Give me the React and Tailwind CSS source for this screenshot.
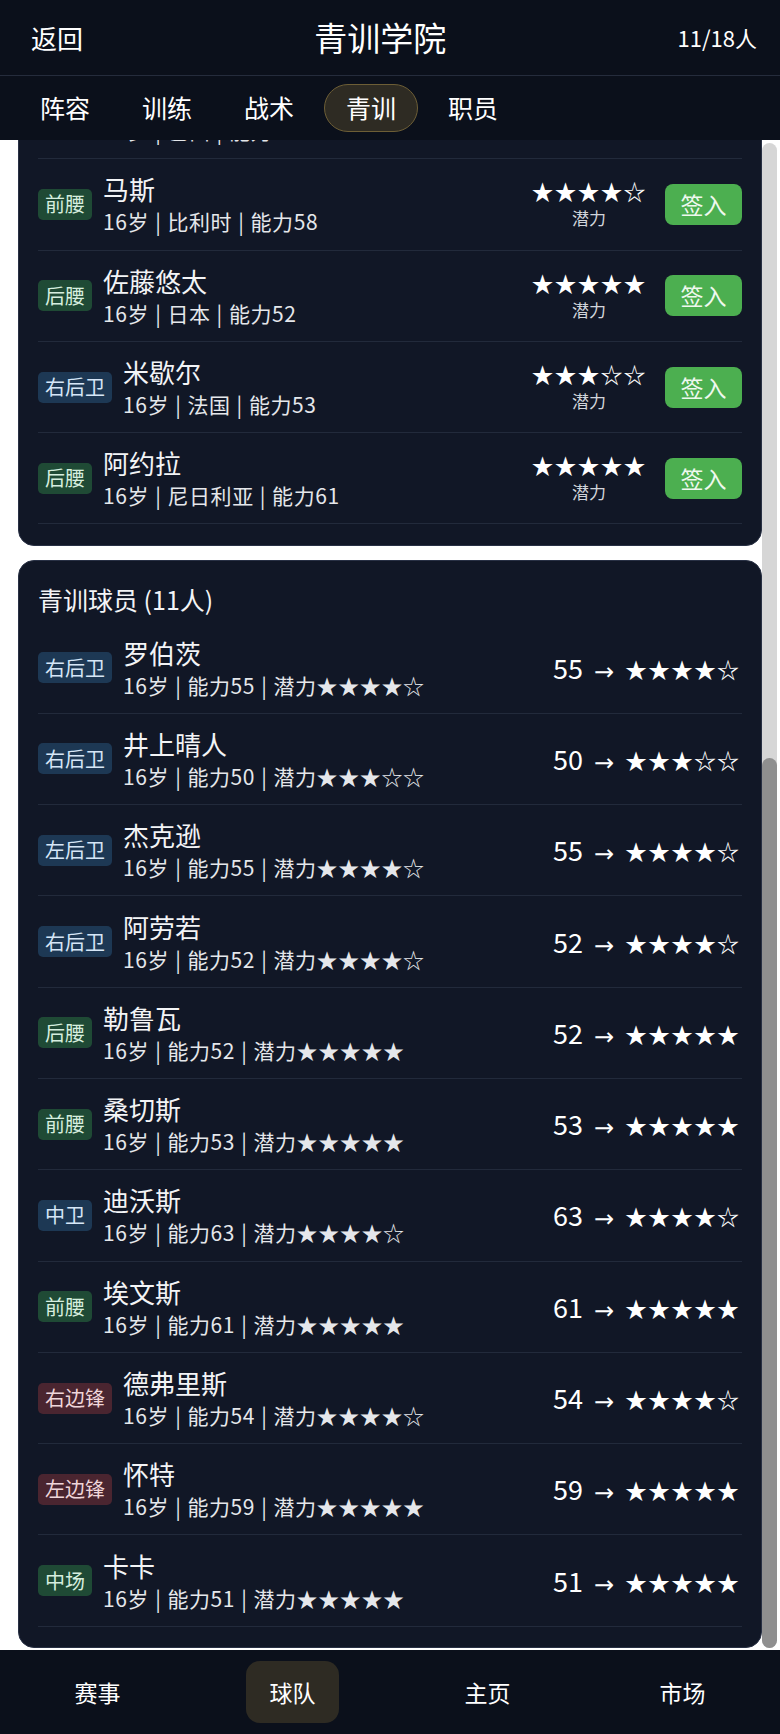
import React from 'react';

const FONT = { fontFamily: '"Noto Sans CJK SC", "Noto Sans", sans-serif' };
const ARROW_FONT = { fontFamily: '"DejaVu Sans", sans-serif' };

const BADGE = {
  green: 'bg-[#1f4a35] text-[#d6eedf]',
  blue: 'bg-[#1d3854] text-[#d6e6f7]',
  red: 'bg-[#4a2530] text-[#f0d6da]',
};

const posColor = (pos) => {
  if (pos.includes('边锋')) return 'red';
  if (pos.includes('卫')) return 'blue';
  return 'green';
};

const stars = (n) => '★'.repeat(n) + '☆'.repeat(5 - n);

// 待签约的青训候选
const prospects = [
  { pos: '中场', name: '席尔瓦', sub: ['16岁', '巴西', '能力55'], pot: 4 },
  { pos: '前腰', name: '马斯', sub: ['16岁', '比利时', '能力58'], pot: 4 },
  { pos: '后腰', name: '佐藤悠太', sub: ['16岁', '日本', '能力52'], pot: 5 },
  { pos: '右后卫', name: '米歇尔', sub: ['16岁', '法国', '能力53'], pot: 3 },
  { pos: '后腰', name: '阿约拉', sub: ['16岁', '尼日利亚', '能力61'], pot: 5 },
];

// 已在青训的球员
const youth = [
  { pos: '右后卫', name: '罗伯茨', ovr: 55, pot: 4 },
  { pos: '右后卫', name: '井上晴人', ovr: 50, pot: 3 },
  { pos: '左后卫', name: '杰克逊', ovr: 55, pot: 4 },
  { pos: '右后卫', name: '阿劳若', ovr: 52, pot: 4 },
  { pos: '后腰', name: '勒鲁瓦', ovr: 52, pot: 5 },
  { pos: '前腰', name: '桑切斯', ovr: 53, pot: 5 },
  { pos: '中卫', name: '迪沃斯', ovr: 63, pot: 4 },
  { pos: '前腰', name: '埃文斯', ovr: 61, pot: 5 },
  { pos: '右边锋', name: '德弗里斯', ovr: 54, pot: 4 },
  { pos: '左边锋', name: '怀特', ovr: 59, pot: 5 },
  { pos: '中场', name: '卡卡', ovr: 51, pot: 5 },
];

function Badge({ pos }) {
  return (
    <span className={`shrink-0 h-[31px] px-[7px] rounded-[5px] flex items-center text-[20px] leading-none ${BADGE[posColor(pos)]}`}>
      {pos}
    </span>
  );
}

function PlayerInfo({ pos, name, sub }) {
  return (
    <div className="flex items-center gap-[11px] min-w-0">
      <Badge pos={pos} />
      <div className="flex flex-col">
        <span className="text-[26px] leading-[34px] text-[#f3f4f6]">{name}</span>
        <span className="text-[21px] leading-[30px] text-[#e5e7eb] whitespace-nowrap tracking-[0.6px]">
          {sub.map((s, i) => (
            <React.Fragment key={i}>
              {i > 0 && <span className="mx-[6px]">|</span>}
              {s}
            </React.Fragment>
          ))}
        </span>
      </div>
    </div>
  );
}

function Card({ children, className = '' }) {
  return (
    <div className={`bg-[#111726] border border-[#283044] rounded-[16px] px-[19px] ${className}`}>
      {children}
    </div>
  );
}

export default function App() {
  const tabs = ['阵容', '训练', '战术', '青训', '职员'];
  const nav = ['赛事', '球队', '主页', '市场'];

  return (
    <div className="w-full h-[1734px] flex flex-col bg-white overflow-hidden" style={FONT}>
      <header className="h-[76px] shrink-0 bg-[#0b101b] border-b border-[#252c3c] flex items-center justify-between pl-[31px] pr-[23px] text-white">
        <span className="text-[26px]">返回</span>
        <span className="text-[33px]">青训学院</span>
        <span className="text-[22px]">11/18人</span>
      </header>

      <nav className="h-[64px] shrink-0 bg-[#0b101b] flex items-center gap-[8px] pl-[18px]">
        {tabs.map((t) => (
          <div
            key={t}
            className={`w-[94px] h-[48px] flex items-center justify-center rounded-full text-[25px] text-white ${
              t === '青训' ? 'bg-[#2e2b23] border border-[#6d5e36]' : ''
            }`}
          >
            {t}
          </div>
        ))}
      </nav>

      <div className="h-[1510px] shrink-0 flex overflow-hidden bg-white">
        <div className="flex-1 pl-[18px] overflow-hidden">
          <div className="mt-[-134px] flex flex-col gap-[14px]">
            <Card className="pb-[21px]">
              <div className="h-[61px] pt-[22px] text-[25px] leading-[32px] text-[#f3f4f6]">新秀候选 (5人)</div>
              {prospects.map((p) => (
                <div key={p.name} className="h-[91.3px] border-b border-[#222a3b] flex items-center justify-between">
                  <PlayerInfo pos={p.pos} name={p.name} sub={p.sub} />
                  <div className="flex items-center gap-[19px]">
                    <div className="flex flex-col items-center w-[114px]">
                      <span className="text-[22px] leading-[28px] text-white tracking-[1px]">{stars(p.pot)}</span>
                      <span className="text-[17px] leading-[28px] text-[#d1d5db]">潜力</span>
                    </div>
                    <button className="w-[77px] h-[41px] rounded-[8px] bg-[#4caf50] text-[23px] text-[#eef8ee] flex items-center justify-center">
                      签入
                    </button>
                  </div>
                </div>
              ))}
            </Card>

            <Card className="pb-[20px]">
              <div className="h-[61px] pt-[22px] text-[25px] leading-[32px] text-[#f3f4f6]">青训球员 (11人)</div>
              {youth.map((p) => (
                <div key={p.name} className="h-[91.3px] border-b border-[#222a3b] flex items-center justify-between">
                  <PlayerInfo pos={p.pos} name={p.name} sub={['16岁', `能力${p.ovr}`, `潜力${stars(p.pot)}`]} />
                  <div className="flex items-center text-white whitespace-nowrap pr-[2px]">
                    <span className="text-[27px] leading-[32px]">{p.ovr}</span>
                    <span className="text-[24px] leading-[32px] ml-[11px] mr-[11px] mt-[8px]" style={ARROW_FONT}>→</span>
                    <span className="text-[22px] leading-[32px] tracking-[1px]">{stars(p.pot)}</span>
                  </div>
                </div>
              ))}
            </Card>
          </div>
        </div>

        <div className="w-[18px] shrink-0 pt-[3px] pb-[2px] pr-[3px]">
          <div className="h-full w-[15px] rounded-full bg-[#d6d6d6] flex flex-col">
            <div className="h-[615px] shrink-0" />
            <div className="flex-1 rounded-full bg-[#8f8f8f]" />
          </div>
        </div>
      </div>

      <footer className="h-[84px] shrink-0 bg-[#0b101b] grid grid-cols-4 items-center">
        {nav.map((n) => (
          <div key={n} className="flex justify-center">
            <div
              className={`w-[93px] h-[62px] rounded-[14px] flex items-center justify-center text-[23px] text-white ${
                n === '球队' ? 'bg-[#2e2b23]' : ''
              }`}
            >
              {n}
            </div>
          </div>
        ))}
      </footer>
    </div>
  );
}
